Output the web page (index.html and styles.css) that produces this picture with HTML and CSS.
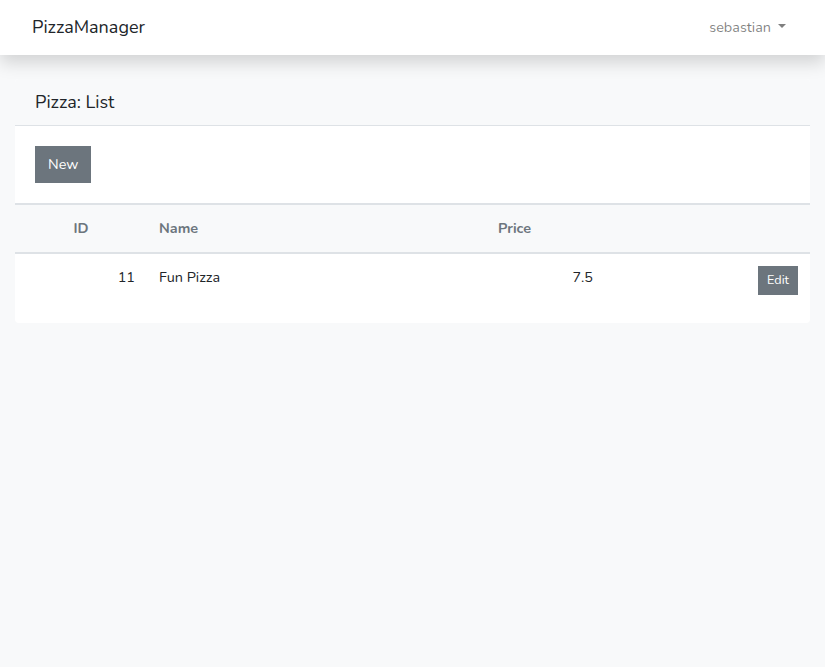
FILE: index.html
```html
<!DOCTYPE html>
<html lang="en">
<head>
<meta charset="utf-8">
<title>PizzaManager</title>
<link rel="stylesheet" href="styles.css">
</head>
<body>
<nav class="navbar">
  <a class="brand">PizzaManager</a>
  <a class="user">sebastian <span class="caret"></span></a>
</nav>
<main class="main">
  <div class="card">
    <div class="card-header">Pizza: List</div>
    <div class="card-body">
      <button class="btn">New</button>
    </div>
    <table class="table">
      <colgroup>
        <col class="c1"><col class="c2"><col class="c3"><col class="c4">
      </colgroup>
      <thead>
        <tr><th class="center">ID</th><th>Name</th><th>Price</th><th></th></tr>
      </thead>
      <tbody>
        <tr><td class="right">11</td><td>Fun Pizza</td><td class="right">7.5</td><td class="right"><button class="btn btn-sm">Edit</button></td></tr>
      </tbody>
    </table>
  </div>
</main>
</body>
</html>
```

FILE: styles.css
```css
* { box-sizing: border-box; }
html, body { margin: 0; padding: 0; }
body {
  background: #f8f9fa;
  font-family: "Nunito", "Lato", "Noto Sans", sans-serif;
  font-size: 14.4px;
  line-height: 1.6;
  color: #212529;
}
.navbar {
  background: #fff;
  height: 55px;
  display: flex;
  align-items: center;
  justify-content: space-between;
  padding: 0 39px 0 32px;
  box-shadow: 0 8px 16px rgba(0,0,0,.15);
  position: relative;
  z-index: 1;
}
.brand { font-size: 18px; color: #212529; }
.user { color: rgba(0,0,0,.5); font-size: 14.4px; display: flex; align-items: center; }
.caret {
  display: inline-block;
  margin-left: 7px;
  border-top: 4.5px solid rgba(0,0,0,.5);
  border-left: 4.5px solid transparent;
  border-right: 4.5px solid transparent;
  margin-top: -2px;
}
.main { padding: 24px 15px; }
.card { border-radius: 4px; overflow: hidden; background: #fff; padding-bottom: 16px; }
.card-header {
  padding: 10px 20px 10px;
  font-size: 18px;
  line-height: 26px;
  border-bottom: 1px solid #dee2e6;
  background: #f8f9fa;
}
.card-body { background: #fff; padding: 20px; }
.btn {
  font-family: inherit;
  font-size: 14.4px;
  line-height: 1.6;
  padding: 6px 12px;
  border: 1px solid #6c757d;
  background: #6c757d;
  color: #fff;
  border-radius: 0;
  display: inline-block;
  vertical-align: top;
}
.btn-sm { font-size: 12.6px; line-height: 1.5; padding: 4px 8px; }
.table {
  width: 100%;
  border-collapse: collapse;
  table-layout: fixed;
  background: #fff;
}
.table col.c1 { width: 132px; }
.table col.c2 { width: 339px; }
.table col.c3 { width: 119px; }
.table col.c4 { width: 205px; }
.table th, .table td { padding: 12px; vertical-align: top; text-align: left; }
.table thead th {
  background: #f8f9fa;
  color: #6c757d;
  font-weight: 700;
  border-top: 2px solid #dee2e6;
  border-bottom: 2px solid #dee2e6;
}
.table th.center { text-align: center; }
.table td.right { text-align: right; }
```
